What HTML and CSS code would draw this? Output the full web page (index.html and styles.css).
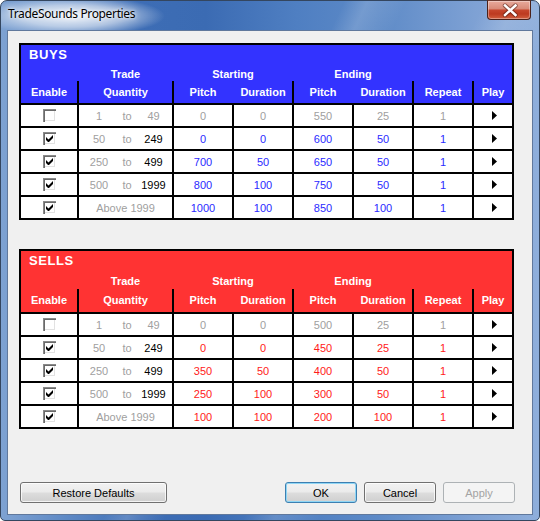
FILE: index.html
```html
<!DOCTYPE html>
<html lang="en">
<head>
<meta charset="utf-8">
<title>TradeSounds Properties</title>
<link rel="stylesheet" href="styles.css">
</head>
<body>
<div class="window">
  <div class="titlebar">
    <span class="title">TradeSounds Properties</span>
    <button class="close" aria-label="Close">
      <svg viewBox="0 0 44 20" width="44" height="20">
        <path d="M18 5.5 L28.5 15 M28.5 5.5 L18 15" stroke="#4a1a10" stroke-width="4.4" stroke-linecap="round" opacity="0.55" fill="none"/>
        <path d="M18 5.5 L28.5 15 M28.5 5.5 L18 15" stroke="#fff" stroke-width="2.4" stroke-linecap="square" fill="none"/>
      </svg>
    </button>
  </div>
  <div class="client">

    <section class="panel buys">
      <div class="p-title">BUYS</div>
      <div class="cols p-groups">
        <span class="g-trade">Trade</span>
        <span class="g-start">Starting</span>
        <span class="g-end">Ending</span>
      </div>
      <div class="cols p-labels">
        <span>Enable</span>
        <span class="dv">Quantity</span>
        <span class="dv">Pitch</span>
        <span>Duration</span>
        <span class="dv">Pitch</span>
        <span>Duration</span>
        <span class="dv">Repeat</span>
        <span class="dv">Play</span>
      </div>
      <div class="cols data">
        <span class="cell"><span class="cb"></span></span>
        <span class="cell qty"><span class="gr">1</span><span class="gr">to</span><span class="gr">49</span></span>
        <span class="cell gr">0</span><span class="cell gr">0</span><span class="cell gr">550</span><span class="cell gr">25</span><span class="cell gr">1</span>
        <span class="cell play"><svg viewBox="0 0 5 9" width="5" height="9"><polygon points="0,0 5,4.5 0,9"/></svg></span>

        <span class="cell"><span class="cb on"><svg viewBox="0 0 7 7" width="7" height="7"><polygon points="0,2 2.5,4.5 7,0 7,3 2.5,7.5 0,5"/></svg></span></span>
        <span class="cell qty"><span class="gr">50</span><span class="gr">to</span><span class="bk">249</span></span>
        <span class="cell bl">0</span><span class="cell bl">0</span><span class="cell bl">600</span><span class="cell bl">50</span><span class="cell bl">1</span>
        <span class="cell play"><svg viewBox="0 0 5 9" width="5" height="9"><polygon points="0,0 5,4.5 0,9"/></svg></span>

        <span class="cell"><span class="cb on"><svg viewBox="0 0 7 7" width="7" height="7"><polygon points="0,2 2.5,4.5 7,0 7,3 2.5,7.5 0,5"/></svg></span></span>
        <span class="cell qty"><span class="gr">250</span><span class="gr">to</span><span class="bk">499</span></span>
        <span class="cell bl">700</span><span class="cell bl">50</span><span class="cell bl">650</span><span class="cell bl">50</span><span class="cell bl">1</span>
        <span class="cell play"><svg viewBox="0 0 5 9" width="5" height="9"><polygon points="0,0 5,4.5 0,9"/></svg></span>

        <span class="cell"><span class="cb on"><svg viewBox="0 0 7 7" width="7" height="7"><polygon points="0,2 2.5,4.5 7,0 7,3 2.5,7.5 0,5"/></svg></span></span>
        <span class="cell qty"><span class="gr">500</span><span class="gr">to</span><span class="bk">1999</span></span>
        <span class="cell bl">800</span><span class="cell bl">100</span><span class="cell bl">750</span><span class="cell bl">50</span><span class="cell bl">1</span>
        <span class="cell play"><svg viewBox="0 0 5 9" width="5" height="9"><polygon points="0,0 5,4.5 0,9"/></svg></span>

        <span class="cell"><span class="cb on"><svg viewBox="0 0 7 7" width="7" height="7"><polygon points="0,2 2.5,4.5 7,0 7,3 2.5,7.5 0,5"/></svg></span></span>
        <span class="cell gr">Above 1999</span>
        <span class="cell bl">1000</span><span class="cell bl">100</span><span class="cell bl">850</span><span class="cell bl">100</span><span class="cell bl">1</span>
        <span class="cell play"><svg viewBox="0 0 5 9" width="5" height="9"><polygon points="0,0 5,4.5 0,9"/></svg></span>
      </div>
    </section>

    <section class="panel sells">
      <div class="p-title">SELLS</div>
      <div class="cols p-groups">
        <span class="g-trade">Trade</span>
        <span class="g-start">Starting</span>
        <span class="g-end">Ending</span>
      </div>
      <div class="cols p-labels">
        <span>Enable</span>
        <span class="dv">Quantity</span>
        <span class="dv">Pitch</span>
        <span>Duration</span>
        <span class="dv">Pitch</span>
        <span>Duration</span>
        <span class="dv">Repeat</span>
        <span class="dv">Play</span>
      </div>
      <div class="cols data">
        <span class="cell"><span class="cb"></span></span>
        <span class="cell qty"><span class="gr">1</span><span class="gr">to</span><span class="gr">49</span></span>
        <span class="cell gr">0</span><span class="cell gr">0</span><span class="cell gr">500</span><span class="cell gr">25</span><span class="cell gr">1</span>
        <span class="cell play"><svg viewBox="0 0 5 9" width="5" height="9"><polygon points="0,0 5,4.5 0,9"/></svg></span>

        <span class="cell"><span class="cb on"><svg viewBox="0 0 7 7" width="7" height="7"><polygon points="0,2 2.5,4.5 7,0 7,3 2.5,7.5 0,5"/></svg></span></span>
        <span class="cell qty"><span class="gr">50</span><span class="gr">to</span><span class="bk">249</span></span>
        <span class="cell rd">0</span><span class="cell rd">0</span><span class="cell rd">450</span><span class="cell rd">25</span><span class="cell rd">1</span>
        <span class="cell play"><svg viewBox="0 0 5 9" width="5" height="9"><polygon points="0,0 5,4.5 0,9"/></svg></span>

        <span class="cell"><span class="cb on"><svg viewBox="0 0 7 7" width="7" height="7"><polygon points="0,2 2.5,4.5 7,0 7,3 2.5,7.5 0,5"/></svg></span></span>
        <span class="cell qty"><span class="gr">250</span><span class="gr">to</span><span class="bk">499</span></span>
        <span class="cell rd">350</span><span class="cell rd">50</span><span class="cell rd">400</span><span class="cell rd">50</span><span class="cell rd">1</span>
        <span class="cell play"><svg viewBox="0 0 5 9" width="5" height="9"><polygon points="0,0 5,4.5 0,9"/></svg></span>

        <span class="cell"><span class="cb on"><svg viewBox="0 0 7 7" width="7" height="7"><polygon points="0,2 2.5,4.5 7,0 7,3 2.5,7.5 0,5"/></svg></span></span>
        <span class="cell qty"><span class="gr">500</span><span class="gr">to</span><span class="bk">1999</span></span>
        <span class="cell rd">250</span><span class="cell rd">100</span><span class="cell rd">300</span><span class="cell rd">50</span><span class="cell rd">1</span>
        <span class="cell play"><svg viewBox="0 0 5 9" width="5" height="9"><polygon points="0,0 5,4.5 0,9"/></svg></span>

        <span class="cell"><span class="cb on"><svg viewBox="0 0 7 7" width="7" height="7"><polygon points="0,2 2.5,4.5 7,0 7,3 2.5,7.5 0,5"/></svg></span></span>
        <span class="cell gr">Above 1999</span>
        <span class="cell rd">100</span><span class="cell rd">100</span><span class="cell rd">200</span><span class="cell rd">100</span><span class="cell rd">1</span>
        <span class="cell play"><svg viewBox="0 0 5 9" width="5" height="9"><polygon points="0,0 5,4.5 0,9"/></svg></span>
      </div>
    </section>

    <div class="buttons">
      <button class="btn wide">Restore Defaults</button>
      <button class="btn default">OK</button>
      <button class="btn">Cancel</button>
      <button class="btn" disabled>Apply</button>
    </div>
  </div>
</div>
</body>
</html>
```

FILE: styles.css
```css
* { box-sizing: border-box; }
html, body { margin: 0; padding: 0; }
body {
  width: 540px;
  height: 521px;
  overflow: hidden;
  background: #ffffff;
  font-family: "Liberation Sans", Arial, sans-serif;
}

.window {
  width: 540px;
  height: 521px;
  display: flex;
  flex-direction: column;
  border: 1px solid #34465f;
  border-radius: 7px 7px 5px 5px;
  padding: 0 6px 5px 6px;
  background:
    radial-gradient(ellipse 92px 20px at 72px 15px, rgba(255,255,255,0.92) 0%, rgba(255,255,255,0.55) 55%, rgba(255,255,255,0) 100%),
    linear-gradient(115deg, rgba(255,255,255,0) 44%, rgba(255,255,255,0.16) 47%, rgba(255,255,255,0) 52%, rgba(255,255,255,0) 62%, rgba(255,255,255,0.14) 66%, rgba(255,255,255,0) 72%),
    linear-gradient(90deg, #7ea2d2 0%, #5e89c5 12%, #3d6db5 26%, #3b6bb3 38%, #4f7fc2 55%, #5d8ac7 70%, #7ea1d4 88%, #8eaedb 100%);
}

.titlebar {
  height: 29px;
  display: flex;
  justify-content: space-between;
  align-items: flex-start;
  flex-shrink: 0;
}
.title {
  padding: 5px 0 0 1px;
  font-family: "Noto Sans", "Open Sans", sans-serif;
  font-size: 12px;
  line-height: 16px;
  color: #000;
  letter-spacing: -0.35px;
  text-shadow: 0 0 6px rgba(255,255,255,0.9), 0 0 3px rgba(255,255,255,0.9);
}
.close {
  width: 44px;
  height: 20px;
  margin: -1px 2px 0 0;
  padding: 0;
  border: 1px solid #4b2119;
  border-top-color: #6a3a30;
  border-radius: 0 0 4px 4px;
  background: linear-gradient(#e8aa9c 0%, #d88a78 44%, #c7472d 50%, #bd3a20 72%, #d2603f 100%);
  box-shadow: inset 0 0 0 1px rgba(255,255,255,0.35);
  display: block;
}
.close svg { display: block; margin: -1px 0 0 -1px; }

.client {
  flex: 1;
  display: flex;
  flex-direction: column;
  border: 1px solid #60789c;
  background: #f0f0f0;
  padding: 12px 17px 11px 11px;
}

/* panels */
.panel {
  width: 495px;
  border: 2px solid #000;
  color: #fff;
}
.panel.buys { background: #3333ff; }
.panel.sells { background: #ff3333; margin-top: 29px; }

.cols {
  display: grid;
  grid-template-columns: 56px 93px 58px 58px 58px 58px 58px 38px;
  column-gap: 2px;
}

.p-title {
  height: 19px;
  line-height: 19px;
  padding-left: 8px;
  font-weight: bold;
  font-size: 13px;
  letter-spacing: 0.6px;
}
.p-groups {
  height: 17px;
  padding-top: 3px;
  line-height: 14px;
  font-weight: bold;
  font-size: 11px;
  text-align: center;
}
.g-trade { grid-column: 2; }
.g-start { grid-column: 3 / 5; }
.g-end { grid-column: 5 / 7; }

.p-labels {
  height: 22px;
  line-height: 22px;
  font-weight: bold;
  font-size: 11px;
  text-align: center;
}
.p-labels .dv { box-shadow: -2px 0 0 0 #000; }

.sells .p-groups { height: 19px; padding-top: 4px; }
.sells .p-labels { height: 23px; line-height: 23px; }

.data {
  background: #000;
  padding-top: 2px;
  grid-auto-rows: 21px;
  row-gap: 2px;
}
.cell {
  background: #ffffff;
  display: flex;
  align-items: center;
  justify-content: center;
  font-size: 11px;
}
.qty {
  display: grid;
  grid-template-columns: 40px 16px 37px;
  text-align: center;
  align-items: center;
}

.gr { color: #a0a0a0; }
.bk { color: #000000; }
.bl { color: #2a2aff; }
.rd { color: #ff1a1a; }

.cb {
  width: 13px;
  height: 13px;
  background: #ffffff;
  box-shadow:
    inset 1px 1px 0 #8a8a8a,
    inset 2px 2px 0 #6a6a6a,
    inset -1px -1px 0 #ffffff,
    inset -2px -2px 0 #e2e2e2;
  position: relative;
}
.cb svg {
  position: absolute;
  left: 3px;
  top: 3px;
  fill: #000;
}
.play { padding-left: 2px; }
.play svg { display: block; fill: #000; }

/* buttons */
.buttons {
  margin-top: auto;
  margin-left: 1px;
  width: 495px;
  display: flex;
  gap: 7px;
}
.btn {
  height: 21px;
  width: 72px;
  padding: 0;
  font-family: "Liberation Sans", Arial, sans-serif;
  font-size: 11px;
  color: #000;
  border: 1px solid #707070;
  border-radius: 3px;
  background: linear-gradient(#f2f2f2 0%, #ebebeb 48%, #dddddd 52%, #cfcfcf 100%);
  box-shadow: inset 0 0 0 1px rgba(255,255,255,0.75);
}
.btn.wide { width: 147px; }
.btn.default {
  margin-left: auto;
  border-color: #3c7fb1;
  box-shadow: inset 0 0 0 1px #8fd6f5;
}
.btn:disabled {
  color: #a3a3a3;
  border-color: #adb2b5;
  background: #f4f4f4;
  box-shadow: none;
}
```
